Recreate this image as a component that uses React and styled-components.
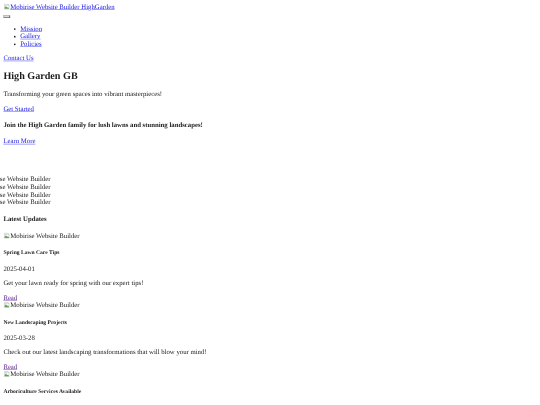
import React from 'react'
import styled, { createGlobalStyle } from 'styled-components'

const Reset = createGlobalStyle`
  html, body {
    margin: 0;
    width: 540px;
    height: 405px;
    overflow: hidden;
    background: #fff;
  }
`

// the reference is a 1280px page shrunk down to 540px
const Page = styled.div`
  width: 1264px;
  padding: 8px;
  transform: scale(0.421875);
  transform-origin: 0 0;
  filter: blur(1.3px);
  font-family: 'Liberation Serif', 'Times New Roman', serif;
  font-size: 16px;
  color: #1c1c1c;
  text-rendering: geometricPrecision;

  a {
    color: #2020e0;
    text-decoration: underline;
  }
`

const VisitedLink = styled.a`
  && {
    color: #551a8b;
  }
`

const Toggler = styled.button`
  border-color: #b0b0b0;
`

const Nav = styled.ul`
  margin: 16px 0;
  padding-left: 40px;
`

const Title = styled.h2`
  font-size: 24px;
  margin: 19.92px 0;
`

const Text = styled.p`
  margin: 16px 0;
`

const Subtitle = styled.h4`
  font-size: 16px;
  margin: 21.28px 0;
`

const Ribbon = styled.div`
  margin-top: 72px;
  margin-bottom: 22px;
  margin-left: -8px;
  overflow: hidden;
`

const RibbonItem = styled.div`
  margin-left: -45px;
  white-space: nowrap;
`

const CardTitle = styled.h5`
  font-size: 13.28px;
  margin: 22.18px 0;
`

const BrokenIcon = styled.svg`
  width: 16px;
  height: 16px;
  vertical-align: -3px;
`

const BrokenImage = ({ alt }) => (
  <span>
    <BrokenIcon viewBox="0 0 16 16">
      <path d="M2.5 1.5h8l3 3v9h-11z" fill="#fff" stroke="#a8a8a8" />
      <path d="M10.5 1.5v3h3" fill="#e8e8e8" stroke="#a8a8a8" />
      <path d="M3 10l3-3 3 3 2-1 2 2v2H3z" fill="#5aa84a" />
      <path d="M4 3h5v4H4z" fill="#c5d9f5" />
    </BrokenIcon>
    {alt}
  </span>
)

const posts = [
  { title: 'Spring Lawn Care Tips', date: '2025-04-01', text: 'Get your lawn ready for spring with our expert tips!' },
  { title: 'New Landscaping Projects', date: '2025-03-28', text: 'Check out our latest landscaping transformations that will blow your mind!' },
  { title: 'Arboriculture Services Available', date: '2025-03-25', text: 'Our arboriculture services keep your trees healthy.' },
]

const App = () => (
  <>
    <Reset />
    <Page>
      <div>
        <a href="#home"><BrokenImage alt="Mobirise Website Builder" /> HighGarden</a>
      </div>
      <div>
        <Toggler aria-label="Toggle navigation" />
      </div>
      <Nav>
        <li><a href="#mission">Mission</a></li>
        <li><a href="#gallery">Gallery</a></li>
        <li><a href="#policies">Policies</a></li>
      </Nav>
      <a href="#contact">Contact Us</a>
      <Title>High Garden GB</Title>
      <Text>Transforming your green spaces into vibrant masterpieces!</Text>
      <Text><a href="#start">Get Started</a></Text>
      <Subtitle>Join the High Garden family for lush lawns and stunning landscapes!</Subtitle>
      <Text><a href="#more">Learn More</a></Text>
      <Ribbon>
        {[0, 1, 2, 3].map(i => (
          <RibbonItem key={i}>Mobirise Website Builder</RibbonItem>
        ))}
      </Ribbon>
      <Subtitle>Latest Updates</Subtitle>
      {posts.map(post => (
        <article key={post.title}>
          <BrokenImage alt="Mobirise Website Builder" />
          <CardTitle>{post.title}</CardTitle>
          <Text>{post.date}</Text>
          <Text>{post.text}</Text>
          <VisitedLink href="#read">Read</VisitedLink>
        </article>
      ))}
    </Page>
  </>
)

export default App
